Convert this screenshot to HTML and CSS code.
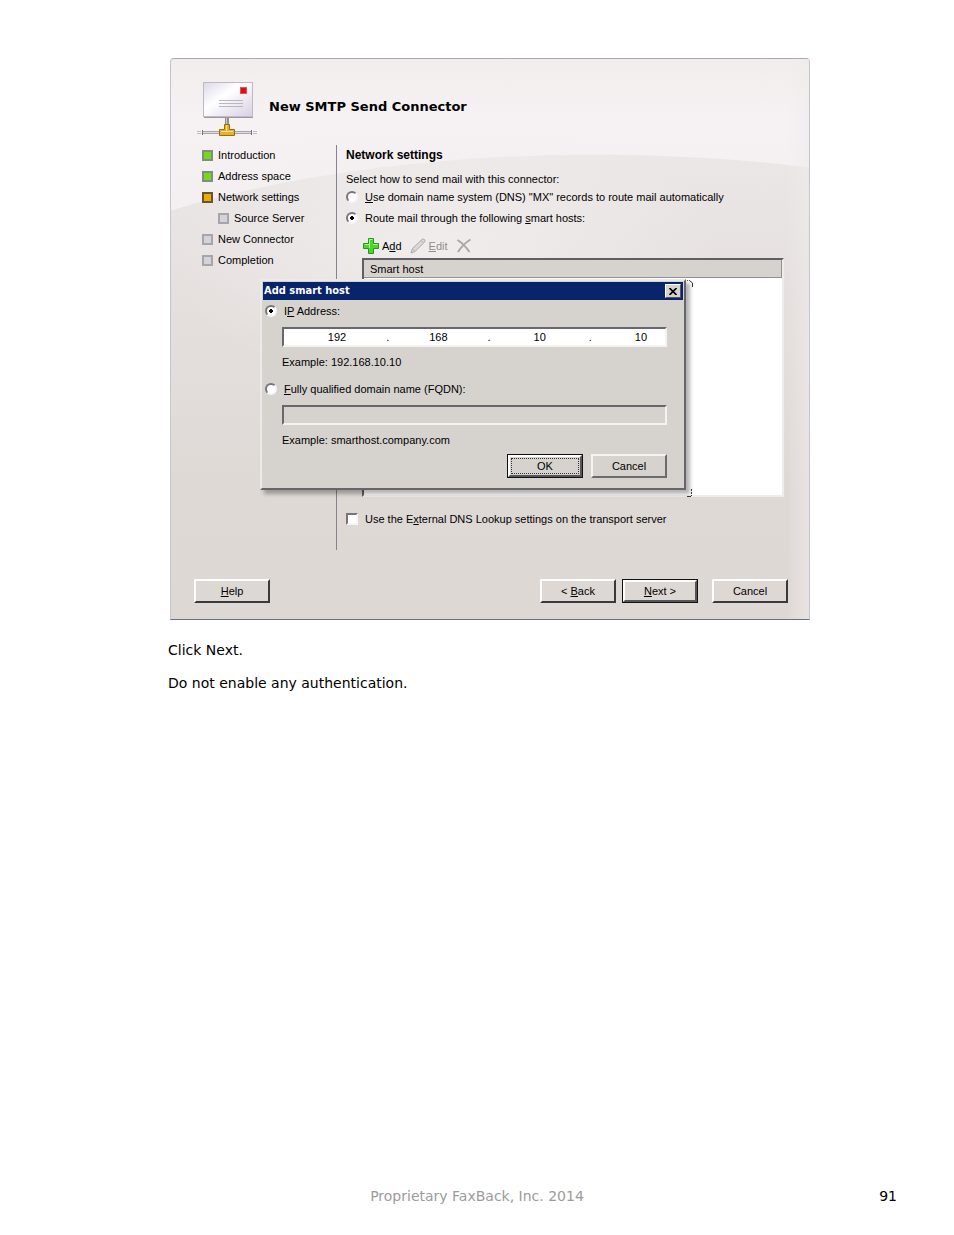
FILE: index.html
```
<!DOCTYPE html>
<html lang="en">
<head>
    <meta charset="UTF-8">
    <meta name="viewport" content="width=device-width, initial-scale=1.0">
    <title>New SMTP Send Connector</title>
    <link rel="stylesheet" href="styles.css">
</head>
<body>
    <main class="content">
        <section class="wizard">
            <svg class="backdrop" viewBox="0 0 640 562" preserveAspectRatio="none" aria-hidden="true">
                <defs>
                    <linearGradient id="hill" x1="0" y1="0" x2="0" y2="1">
                        <stop offset="0" stop-color="#ebe7e6"/>
                        <stop offset="0.3" stop-color="#e5e0de"/>
                        <stop offset="0.7" stop-color="#dfd9d6"/>
                        <stop offset="1" stop-color="#ded8d5"/>
                    </linearGradient>
                    <linearGradient id="edge" x1="0" y1="0" x2="1" y2="0">
                        <stop offset="0" stop-color="#efebeb" stop-opacity="0"/>
                        <stop offset="1" stop-color="#efebeb"/>
                    </linearGradient>
                    <radialGradient id="glow" cx="0.5" cy="0.5" r="0.5">
                        <stop offset="0" stop-color="#f3efef"/>
                        <stop offset="1" stop-color="#f3efef" stop-opacity="0"/>
                    </radialGradient>
                </defs>
                <path d="M0 152C130 112 290 96 420 96C500 96 570 100 640 109V562H0Z" fill="url(#hill)"/>
                <ellipse cx="270" cy="190" rx="280" ry="140" fill="url(#glow)" opacity="0.8"/>
                <rect x="618" y="0" width="22" height="562" fill="url(#edge)" opacity="0.6"/>
            </svg>

            <header class="wizard-header">
                <svg class="mail-icon" width="60" height="56" viewBox="0 0 60 56" aria-hidden="true">
                    <defs>
                        <linearGradient id="paper" x1="0" y1="0" x2="1" y2="1">
                            <stop offset="0" stop-color="#dcd8e8"/>
                            <stop offset="0.4" stop-color="#ffffff"/>
                            <stop offset="1" stop-color="#d6cfe2"/>
                        </linearGradient>
                    </defs>
                    <rect x="6.500" y="0.500" width="49" height="34" fill="url(#paper)" stroke="#bdbac4"/>
                    <path d="M7 35.500H56" stroke="#9c99a3"/>
                    <rect x="43" y="5" width="7" height="7" fill="#e8504c"/>
                    <rect x="44" y="6" width="5" height="5" fill="#dc0f12"/>
                    <path d="M22 18.500H46M22 21.500H46M22 24.500H46" stroke="#b9b6c0"/>
                    <rect x="28" y="36" width="4" height="8" fill="#8d8d93"/>
                    <path d="M29.500 36V44" stroke="#c9c9cf"/>
                    <path d="M0 49.500H4M0 51.500H4M56 49.500H60M56 51.500H60" stroke="#bcbcc2"/>
                    <rect x="5" y="49" width="50" height="3" fill="#a5a5ab"/>
                    <path d="M5 50.500H55" stroke="#dedee2"/>
                    <path d="M5.500 48V53M54.500 48V53" stroke="#707078"/>
                    <path d="M27.500 42.500H32.500V47.500H37.500V53.500H22.500V47.500H27.500Z" fill="#e3b22e" stroke="#9c6a0a"/>
                    <path d="M29.500 43V49M24 49.500H36" stroke="#fbe28a"/>
                </svg>
                <h1>New SMTP Send Connector</h1>
            </header>

            <div class="wizard-body">
                <ol class="steps">
                    <li class="done">Introduction</li>
                    <li class="done">Address space</li>
                    <li class="current">Network settings</li>
                    <li class="sub">Source Server</li>
                    <li>New Connector</li>
                    <li>Completion</li>
                </ol>

                <div class="settings">
                    <h2>Network settings</h2>
                    <p>Select how to send mail with this connector:</p>
                    <label class="option dns-option">
                        <input type="radio" name="route">
                        <span><u>U</u>se domain name system (DNS) "MX" records to route mail automatically</span>
                    </label>
                    <label class="option hosts-option">
                        <input type="radio" name="route" checked>
                        <span>Route mail through the following <u>s</u>mart hosts:</span>
                    </label>

                    <div class="toolbar">
                        <button type="button" class="tool">
                            <svg width="16" height="16" viewBox="0 0 16 16" aria-hidden="true">
                                <path d="M5.500 0.500H10.500V5.500H15.500V10.500H10.500V15.500H5.500V10.500H0.500V5.500H5.500Z" fill="#4fd32f" stroke="#1f9a1a"/>
                                <path d="M6.500 10V6.500H1.500M6.500 6.500V1.500H9.500M10 6.500H14.500" fill="none" stroke="#b4f59c"/>
                            </svg>
                            <span>A<u>d</u>d</span>
                        </button>
                        <button type="button" class="tool" disabled>
                            <svg width="16" height="16" viewBox="0 0 16 16" aria-hidden="true">
                                <path d="M1 15L2.500 10.500L12 1.500Q13.500 0.500 14.500 1.500Q15.500 2.500 14.500 4L5 13.500Z" fill="#dcdad9" stroke="#aaa8a8"/>
                                <path d="M2.500 10.500L5 13.500M11 2.500L13.500 5" stroke="#b5b3b3" fill="none"/>
                            </svg>
                            <span><u>E</u>dit</span>
                        </button>
                        <button type="button" class="tool" aria-label="Remove" disabled>
                            <svg width="16" height="16" viewBox="0 0 16 16" aria-hidden="true">
                                <path d="M1.500 2Q8 6 13.500 14" fill="none" stroke="#a9a7a7" stroke-width="2"/>
                                <path d="M14.500 1.500Q7 6 2 14" fill="none" stroke="#a9a7a7" stroke-width="2"/>
                            </svg>
                        </button>
                    </div>

                    <div class="host-list">
                        <table>
                            <thead>
                                <tr><th>Smart host</th></tr>
                            </thead>
                        </table>
                    </div>

                    <label class="option lookup-option">
                        <input type="checkbox">
                        <span>Use the E<u>x</u>ternal DNS Lookup settings on the transport server</span>
                    </label>
                </div>
            </div>

            <footer class="wizard-footer">
                <button type="button" class="btn help"><u>H</u>elp</button>
                <button type="button" class="btn">&lt; <u>B</u>ack</button>
                <button type="button" class="btn default next"><u>N</u>ext &gt;</button>
                <button type="button" class="btn">Cancel</button>
            </footer>

            <div class="dialog" role="dialog" aria-labelledby="dialogTitle">
                <div class="title-bar">
                    <span id="dialogTitle">Add smart host</span>
                    <button type="button" class="close" aria-label="Close">
                        <svg width="8" height="7" viewBox="0 0 8 7" aria-hidden="true">
                            <path d="M0.500 0L7.500 7M7.500 0L0.500 7" stroke="#000" stroke-width="1.600"/>
                        </svg>
                    </button>
                </div>
                <form class="dialog-body">
                    <label class="option">
                        <input type="radio" name="host" checked>
                        <span>I<u>P</u> Address:</span>
                    </label>
                    <div class="ip-box">
                        <input type="text" value="192" aria-label="First part">
                        <span>.</span>
                        <input type="text" value="168" aria-label="Second part">
                        <span>.</span>
                        <input type="text" value="10" aria-label="Third part">
                        <span>.</span>
                        <input type="text" value="10" aria-label="Fourth part">
                    </div>
                    <p>Example: 192.168.10.10</p>
                    <label class="option fqdn-option">
                        <input type="radio" name="host">
                        <span><u>F</u>ully qualified domain name (FQDN):</span>
                    </label>
                    <input type="text" class="fqdn" aria-label="Fully qualified domain name" disabled>
                    <p>Example: smarthost.company.com</p>
                    <div class="dialog-buttons">
                        <button type="button" class="btn default focused">OK</button>
                        <button type="button" class="btn flat">Cancel</button>
                    </div>
                </form>
                <svg class="corner corner-top" width="6" height="8" viewBox="0 0 6 8" aria-hidden="true">
                    <path d="M0 0.500H4" stroke="#555" stroke-dasharray="1 1"/>
                    <path d="M3 1L5.500 3V7" fill="none" stroke="#333"/>
                </svg>
                <svg class="corner corner-bottom" width="6" height="8" viewBox="0 0 6 8" aria-hidden="true">
                    <path d="M4.500 0V7" stroke="#333" stroke-dasharray="2 1"/>
                    <path d="M0 7.500H4" stroke="#333"/>
                </svg>
            </div>
        </section>

        <p class="note">Click Next.</p>
        <p class="note">Do not enable any authentication.</p>
    </main>

    <footer class="page-footer">
        <span class="owner">Proprietary FaxBack, Inc. 2014</span>
        <span class="page-number">91</span>
    </footer>
</body>
</html>
```

FILE: styles.css
```
* {
    box-sizing: border-box;
}
body {
    margin: 0;
    min-height: 100vh;
    display: flex;
    flex-direction: column;
    background-color: #fff;
    color: #000;
    font-family: "DejaVu Sans", Verdana, sans-serif;
    font-size: 14px;
    line-height: 20px;
}
.content {
    flex: 1;
    padding: 58px 144px 0 168px;
}
.note {
    margin: 0 0 13px;
}

/* Wizard window */
.wizard {
    position: relative;
    margin: 0 0 20px 2px;
    border: 1px solid #c3c5d2;
    border-top-color: #a9a9ad;
    border-bottom-color: #6d7085;
    border-radius: 4px 4px 0 0;
    background: linear-gradient(#f1edec, #f6f2f4 60px, #f3efef 180px, #dfd9d6);
    font-family: "Liberation Sans", Arial, sans-serif;
    font-size: 11px;
    line-height: 16px;
}
.backdrop {
    position: absolute;
    left: 0;
    top: 0;
    width: 100%;
    height: 100%;
}
.wizard-header,
.wizard-body,
.wizard-footer {
    position: relative;
}
.wizard-header {
    display: flex;
    gap: 12px;
    padding: 23px 26px 0;
}
.wizard-header h1 {
    margin: 15px 0 0;
    font-family: "DejaVu Sans", Verdana, sans-serif;
    font-size: 13px;
    line-height: 20px;
}
.mail-icon {
    flex: none;
}
.wizard-body {
    display: flex;
    margin-top: 7px;
    padding: 0 25px 0 31px;
}

/* Steps on the left */
.steps {
    flex: none;
    width: 135px;
    margin: 0;
    padding: 0;
    list-style: none;
    border-right: 1px solid #85838f;
    line-height: 21px;
}
.steps li {
    display: flex;
    align-items: center;
    gap: 5px;
}
.steps li::before {
    content: "";
    width: 7px;
    height: 7px;
    border: 2px solid #a6a5ac;
    background-color: #d5d3d8;
}
.steps .done::before {
    border-color: #858b83;
    background-color: #73dc10;
}
.steps .current::before {
    border-color: #6b5526;
    background-color: #e9ac07;
}
.steps .sub {
    padding-left: 16px;
}

/* Settings */
.settings {
    flex: 1;
    padding: 0 0 23px 9px;
}
.settings h2 {
    margin: 0;
    font-size: 12px;
    line-height: 20px;
}
.settings p {
    margin: 6px 0 0;
}
.option {
    display: flex;
    align-items: center;
    gap: 7px;
}
.dns-option {
    margin-top: 2px;
}
.hosts-option {
    margin-top: 5px;
}
.lookup-option {
    margin-top: 14px;
}
input[type="radio"],
input[type="checkbox"] {
    appearance: none;
    flex: none;
    width: 12px;
    height: 12px;
    margin: 0;
    border: 2px solid;
    border-color: #77757a #f7f5f5 #f7f5f5 #77757a;
    background-color: #fff;
}
input[type="radio"] {
    border-radius: 50%;
}
input[type="radio"]:checked {
    background-image: radial-gradient(circle, #000 2px, transparent 2px);
}
.toolbar {
    display: flex;
    gap: 8px;
    margin: 12px 0 4px 17px;
}
.tool {
    display: flex;
    align-items: center;
    gap: 3px;
    padding: 0;
    border: none;
    background: none;
    color: #000;
    font: inherit;
}
.tool:disabled {
    color: #8f8d8e;
}
.host-list {
    min-height: 239px;
    margin-left: 16px;
    border: 2px solid;
    border-color: #5f5f63 #efecea #efecea #5f5f63;
    background-color: #fff;
}
.host-list table {
    width: 100%;
    border-collapse: collapse;
}
.host-list th {
    padding: 1px 6px 0;
    border: 1px solid #929191;
    border-width: 0 1px 1px 0;
    background-color: #d6d3ce;
    font-weight: normal;
    text-align: left;
}

/* Buttons */
.btn {
    width: 76px;
    height: 24px;
    padding: 0;
    border: 2px solid;
    border-color: #fff #3a3a3c #3a3a3c #fff;
    background-color: transparent;
    color: #000;
    font: inherit;
}
.btn.default {
    outline: 1px solid #111;
    outline-offset: -1px;
    border-color: #fff #55555a #55555a #fff;
    border-width: 3px;
}
.btn.flat {
    border-color: #f4f3f1 #6b6a6c #6b6a6c #f4f3f1;
}
.wizard-footer {
    display: flex;
    gap: 6px;
    padding: 29px 21px 16px 23px;
}
.help {
    margin-right: auto;
}
.next {
    margin-right: 8px;
}

/* Dialog over the wizard */
.dialog {
    position: absolute;
    left: 89px;
    right: 123px;
    top: 220px;
    border: 2px solid;
    border-color: #eceae6 #66666a #66666a #eceae6;
    padding: 1px;
    background-color: #d6d3ce;
    box-shadow: 4px 4px 4px rgba(0, 0, 0, 0.3);
}
.title-bar {
    display: flex;
    align-items: center;
    justify-content: space-between;
    height: 18px;
    padding: 0 2px 0 1px;
    background-color: #08246b;
    color: #fff;
    font-family: "DejaVu Sans Condensed", "DejaVu Sans", Tahoma, sans-serif;
    font-weight: bold;
}
.close {
    display: flex;
    align-items: center;
    justify-content: center;
    width: 16px;
    height: 14px;
    padding: 0;
    border: 1px solid;
    border-color: #fff #55555a #55555a #fff;
    background-color: #d6d3ce;
}
.dialog-body {
    padding: 3px 16px 9px 19px;
}
.dialog-body .option {
    margin-left: -17px;
}
.dialog-body p {
    margin: 7px 0 0;
}
.dialog-body .fqdn-option {
    margin-top: 11px;
}
.ip-box,
.fqdn {
    width: 100%;
    height: 20px;
    margin-top: 8px;
    border: 2px solid;
    border-color: #68686c #f4f3f1 #f4f3f1 #68686c;
}
.ip-box {
    display: flex;
    padding-left: 29px;
    background-color: #fff;
}
.ip-box span {
    flex: 1;
    text-align: center;
}
.ip-box input {
    width: 48px;
    padding: 0;
    border: none;
    background: none;
    font: inherit;
    text-align: center;
}
.fqdn {
    display: block;
    background-color: #d6d3ce;
}
.dialog-buttons {
    display: flex;
    justify-content: flex-end;
    gap: 8px;
    margin-top: 6px;
}
.focused {
    position: relative;
}
.focused::after {
    content: "";
    position: absolute;
    inset: 1px;
    border: 1px dotted #333;
}
.corner {
    position: absolute;
    right: -9px;
}
.corner-top {
    top: -1px;
}
.corner-bottom {
    bottom: -9px;
}

/* Page footer */
.page-footer {
    display: grid;
    grid-template-columns: 1fr auto 1fr;
    align-items: center;
    padding: 0 57px 29px;
}
.owner {
    grid-column: 2;
    color: #9b9b9b;
}
.page-number {
    text-align: right;
}
```
